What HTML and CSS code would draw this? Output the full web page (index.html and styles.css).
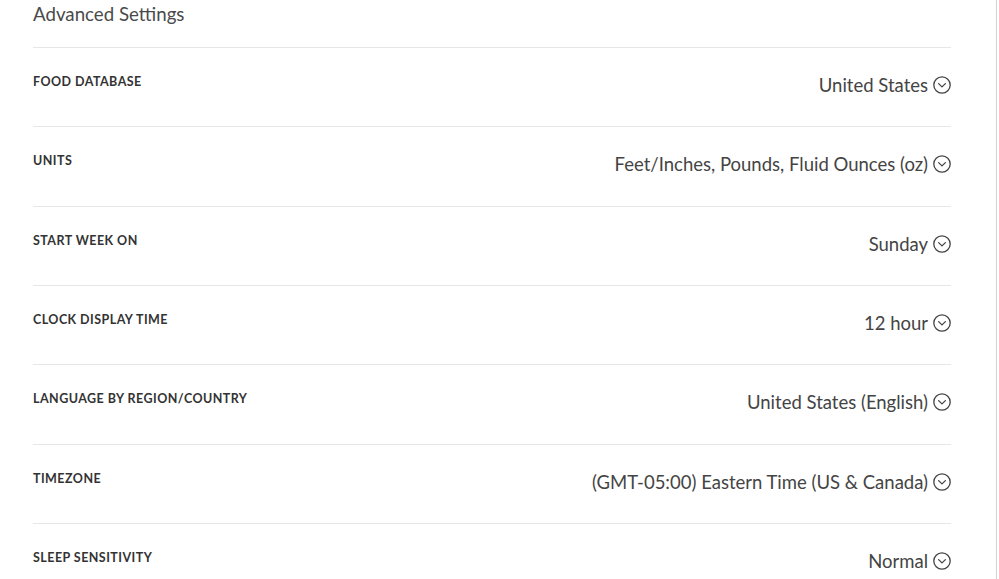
FILE: index.html
```html
<!DOCTYPE html>
<html>
<head>
<meta charset="utf-8">
<link rel="stylesheet" href="styles.css">
</head>
<body>
<div class="page">
  <div class="panel">
    <h2 class="title">Advanced Settings</h2>
    <div class="row">
      <div class="label">FOOD DATABASE</div>
      <div class="value">United States <svg class="chev" viewBox="0 0 18 18"><circle cx="9" cy="9" r="8.2"/><path d="M5.6 7.6 L9 10.9 L12.4 7.6"/></svg></div>
    </div>
    <div class="row">
      <div class="label">UNITS</div>
      <div class="value">Feet/Inches, Pounds, Fluid Ounces (oz) <svg class="chev" viewBox="0 0 18 18"><circle cx="9" cy="9" r="8.2"/><path d="M5.6 7.6 L9 10.9 L12.4 7.6"/></svg></div>
    </div>
    <div class="row">
      <div class="label">START WEEK ON</div>
      <div class="value">Sunday <svg class="chev" viewBox="0 0 18 18"><circle cx="9" cy="9" r="8.2"/><path d="M5.6 7.6 L9 10.9 L12.4 7.6"/></svg></div>
    </div>
    <div class="row">
      <div class="label">CLOCK DISPLAY TIME</div>
      <div class="value">12 hour <svg class="chev" viewBox="0 0 18 18"><circle cx="9" cy="9" r="8.2"/><path d="M5.6 7.6 L9 10.9 L12.4 7.6"/></svg></div>
    </div>
    <div class="row">
      <div class="label">LANGUAGE BY REGION/COUNTRY</div>
      <div class="value">United States (English) <svg class="chev" viewBox="0 0 18 18"><circle cx="9" cy="9" r="8.2"/><path d="M5.6 7.6 L9 10.9 L12.4 7.6"/></svg></div>
    </div>
    <div class="row">
      <div class="label">TIMEZONE</div>
      <div class="value">(GMT-05:00) Eastern Time (US &amp; Canada) <svg class="chev" viewBox="0 0 18 18"><circle cx="9" cy="9" r="8.2"/><path d="M5.6 7.6 L9 10.9 L12.4 7.6"/></svg></div>
    </div>
    <div class="row">
      <div class="label">SLEEP SENSITIVITY</div>
      <div class="value">Normal <svg class="chev" viewBox="0 0 18 18"><circle cx="9" cy="9" r="8.2"/><path d="M5.6 7.6 L9 10.9 L12.4 7.6"/></svg></div>
    </div>
  </div>
</div>
</body>
</html>
```
FILE: styles.css
```css
html, body {
  margin: 0;
  padding: 0;
  background: #fff;
}
body {
  font-family: Lato, "Open Sans", sans-serif;
  color: #444;
}
.page {
  width: 996px;
  height: 579px;
  border-right: 1px solid #d2d2d2;
  overflow: hidden;
}
.panel {
  margin-left: 33px;
  width: 918px;
}
.title {
  margin: 0;
  height: 48px;
  box-sizing: border-box;
  padding-top: 3px;
  font-size: 18.7px;
  font-weight: 400;
  line-height: 22px;
  color: #4a4a4a;
  border-bottom: 1px solid #e6e6e6;
}
.row {
  display: flex;
  justify-content: space-between;
  align-items: flex-start;
  height: 79.33px;
  box-sizing: border-box;
  border-bottom: 1px solid #e6e6e6;
}
.label {
  padding-top: 27px;
  font-size: 12.5px;
  font-weight: 700;
  line-height: 14px;
  letter-spacing: 0.45px;
  color: #333;
}
.value {
  display: flex;
  align-items: center;
  gap: 5px;
  padding-top: 26px;
  font-size: 18.5px;
  line-height: 22px;
  color: #444;
}
.chev {
  width: 18px;
  height: 18px;
  fill: none;
  stroke: #444;
  stroke-width: 1.3;
  stroke-linecap: round;
  stroke-linejoin: round;
}
```
